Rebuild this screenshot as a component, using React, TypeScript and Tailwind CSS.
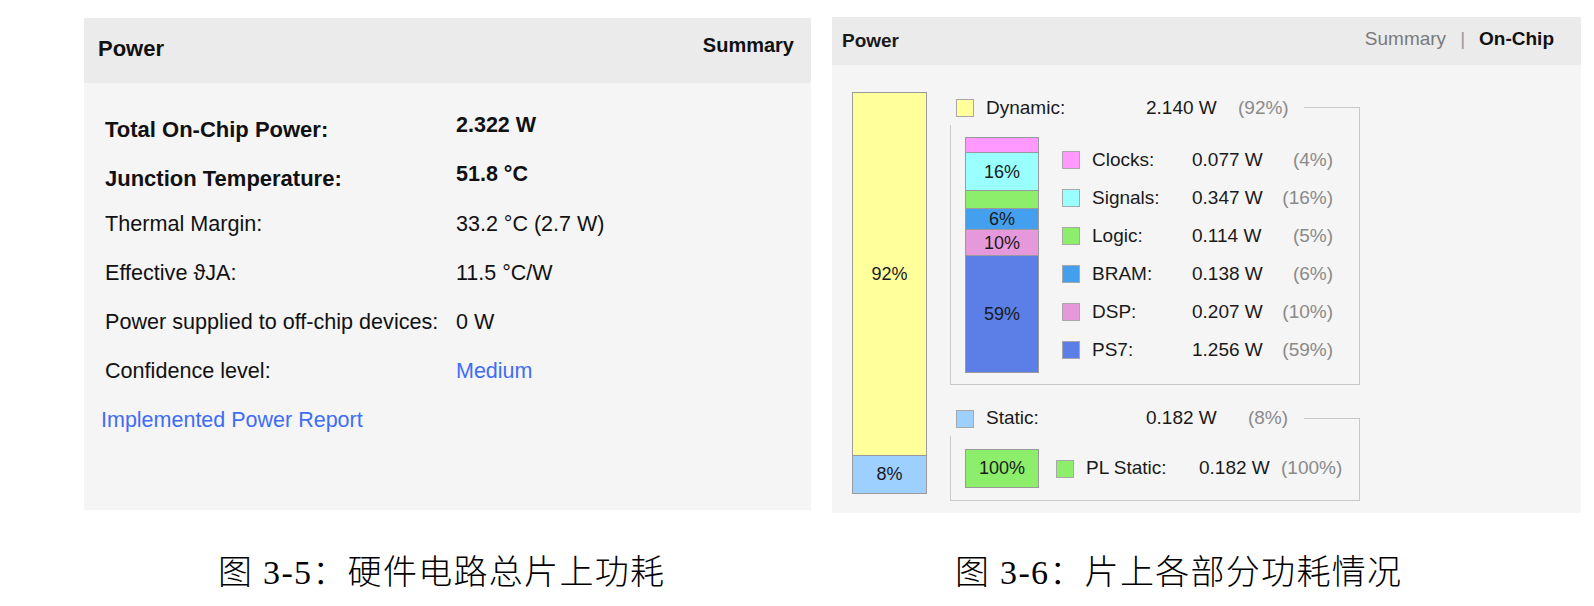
const sans = "font-['Liberation_Sans',Arial,sans-serif]"

interface Part {
  name: string
  color: string
  watts: string
  pct: string
}

const dynamicParts: Part[] = [
  { name: 'Clocks:', color: 'bg-[#ff99ff]', watts: '0.077 W', pct: '(4%)' },
  { name: 'Signals:', color: 'bg-[#99ffff]', watts: '0.347 W', pct: '(16%)' },
  { name: 'Logic:', color: 'bg-[#8cee6a]', watts: '0.114 W', pct: '(5%)' },
  { name: 'BRAM:', color: 'bg-[#44a0ef]', watts: '0.138 W', pct: '(6%)' },
  { name: 'DSP:', color: 'bg-[#e699da]', watts: '0.207 W', pct: '(10%)' },
  { name: 'PS7:', color: 'bg-[#5b7fe6]', watts: '1.256 W', pct: '(59%)' },
]

const summaryRows = [
  { label: 'Total On-Chip Power:', value: '2.322 W', bold: true },
  { label: 'Junction Temperature:', value: '51.8 °C', bold: true },
  { label: 'Thermal Margin:', value: '33.2 °C (2.7 W)' },
  { label: 'Effective ϑJA:', value: '11.5 °C/W' },
  { label: 'Power supplied to off-chip devices:', value: '0 W' },
  { label: 'Confidence level:', value: 'Medium', link: true },
]

function Swatch({ color }: { color: string }) {
  return <div className={`w-[18px] h-[18px] shrink-0 border border-[#a8a8a8] ${color}`} />
}

function GroupTitle({ color, label, watts, pct, className }: { color: string; label: string; watts: string; pct: string; className: string }) {
  return (
    <div className={`flex items-center pl-[6px] ${className}`}>
      <Swatch color={color} />
      <span className="ml-[12px] w-[160px]">{label}</span>
      <span className="w-[92px]">{watts}</span>
      <span className="w-[50px] text-right text-[#8a8a8a]">{pct}</span>
      <div className="ml-[16px] flex-1 self-end h-[18px] border-t border-r border-[#c8c8c8]" />
    </div>
  )
}

function SummaryPanel() {
  return (
    <div className={`${sans} bg-[#f5f5f5] text-[#111]`}>
      <div className="h-[65px] bg-[#ebebeb] flex justify-between pl-[14px] pr-[17px]">
        <span className="pt-[19px] text-[22px] leading-[24px] font-bold">Power</span>
        <span className="pt-[15px] text-[20px] leading-[24px] font-bold">Summary</span>
      </div>
      <div className="h-[427px] pl-[21px] pt-[19px]">
        {summaryRows.map((r) => (
          <div key={r.label} className="flex items-center h-[49px]">
            <span className={`w-[351px] ${r.bold ? 'text-[22px] font-bold pt-[6px]' : 'text-[21.6px]'}`}>{r.label}</span>
            <span className={`text-[21.5px] ${r.bold ? 'font-bold pb-[2px]' : ''} ${r.link ? 'text-[#3f6df5]' : ''}`}>{r.value}</span>
          </div>
        ))}
        <div className="flex items-center h-[49px] -ml-[4px] text-[21.5px] text-[#3f6df5]">Implemented Power Report</div>
      </div>
    </div>
  )
}

function OnChipPanel() {
  return (
    <div className={`${sans} bg-[#f5f5f5] text-[#1a1a1a]`}>
      <div className="h-[48px] bg-[#ebebeb] flex items-center justify-between pl-[10px] pr-[27px]">
        <span className="text-[19px] font-bold">Power</span>
        <div className="flex items-center text-[19px] mb-[4px]">
          <span className="text-[#7a7a7a]">Summary</span>
          <span className="mx-[14px] text-[#9a9a9a]">|</span>
          <span className="font-bold text-[#111]">On-Chip</span>
        </div>
      </div>
      <div className="h-[448px] flex pl-[20px] pt-[27px] text-[19px]">
        <div className="w-[75px] h-[402px] flex flex-col border border-[#9a9a9a] text-[18px]">
          <div className="flex-1 bg-[#ffff9c] flex items-center justify-center">92%</div>
          <div className="h-[38px] bg-[#9dcfff] border-t border-[#9a9a9a] flex items-center justify-center">8%</div>
        </div>
        <div className="ml-[23px] w-[410px] flex flex-col">
          <GroupTitle color="bg-[#ffff9c]" label="Dynamic:" watts="2.140 W" pct="(92%)" className="h-[34px] -mt-px" />
          <div className="h-[260px] flex pl-[14px] pt-[12px] border-l border-r border-b border-[#c8c8c8]">
            <div className="w-[74px] h-[236px] flex flex-col border border-[#9a9a9a] text-[18px] leading-[20px]">
              <div className="h-[15px] bg-[#ff99ff] border-b border-[#9a9a9a]" />
              <div className="h-[38px] bg-[#99ffff] border-b border-[#9a9a9a] flex items-center justify-center">16%</div>
              <div className="h-[18px] bg-[#8cee6a] border-b border-[#9a9a9a]" />
              <div className="h-[21px] bg-[#44a0ef] border-b border-[#9a9a9a] flex items-center justify-center">6%</div>
              <div className="h-[26px] bg-[#e699da] border-b border-[#9a9a9a] flex items-center justify-center">10%</div>
              <div className="flex-1 bg-[#5b7fe6] flex items-center justify-center">59%</div>
            </div>
            <div className="ml-[23px] pt-[4px]">
              {dynamicParts.map((p) => (
                <div key={p.name} className="flex items-center h-[38px]">
                  <Swatch color={p.color} />
                  <span className="ml-[12px] w-[100px]">{p.name}</span>
                  <span className="w-[80px]">{p.watts}</span>
                  <span className="w-[61px] text-right text-[#8a8a8a]">{p.pct}</span>
                </div>
              ))}
            </div>
          </div>
          <GroupTitle color="bg-[#9dcfff]" label="Static:" watts="0.182 W" pct="(8%)" className="mt-[16px] h-[35px]" />
          <div className="h-[65px] flex items-start pl-[14px] pt-[13px] border-l border-r border-b border-[#c8c8c8]">
            <div className="w-[74px] h-[39px] bg-[#8cee6a] border border-[#9a9a9a] text-[18px] flex items-center justify-center">100%</div>
            <div className="ml-[17px] h-[39px] flex items-center">
              <Swatch color="bg-[#8cee6a]" />
              <span className="ml-[12px] w-[113px]">PL Static:</span>
              <span className="w-[82px]">0.182 W</span>
              <span className="w-[61px] text-right text-[#8a8a8a]">(100%)</span>
            </div>
          </div>
        </div>
      </div>
    </div>
  )
}

export default function App() {
  const caption = "font-['Liberation_Serif','Noto_Sans_CJK_SC',serif] text-[34px] leading-[40px] tracking-[1.3px] text-black font-light"
  return (
    <div className="w-[1594px] h-[606px] bg-white flex pt-[17px] overflow-hidden">
      <div className="ml-[84px] w-[727px] mt-px">
        <SummaryPanel />
        <div className={`mt-[43px] pl-[134px] ${caption}`}>图 3-5：硬件电路总片上功耗</div>
      </div>
      <div className="ml-[21px] w-[749px]">
        <OnChipPanel />
        <div className={`mt-[40px] pl-[123px] ${caption}`}>图 3-6：片上各部分功耗情况</div>
      </div>
    </div>
  )
}
